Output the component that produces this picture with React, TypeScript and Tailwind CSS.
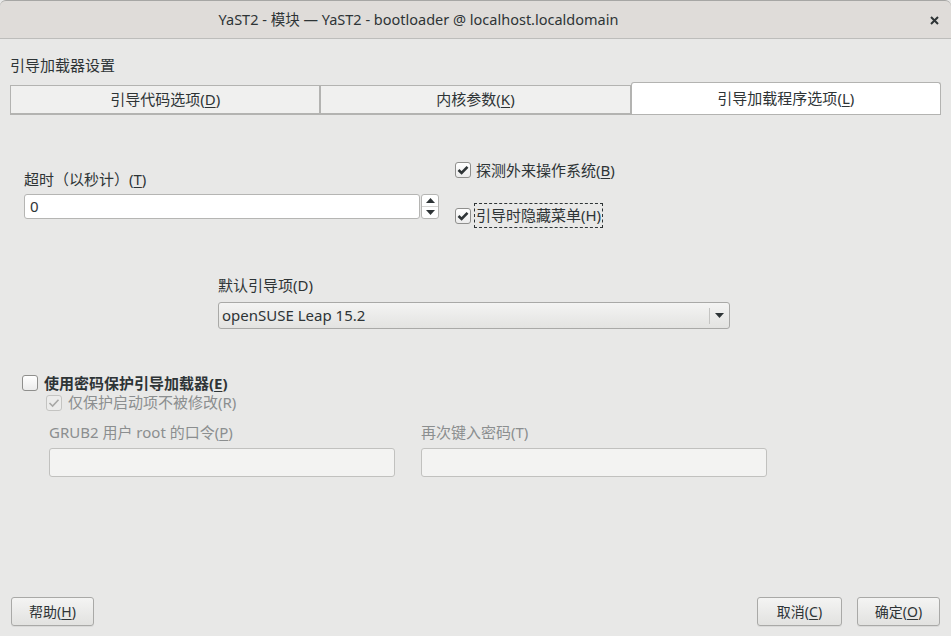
import React from 'react';

const font = { fontFamily: '"Noto Sans", "Noto Sans CJK SC", sans-serif' };

const Check = ({ checked, disabled }: { checked: boolean; disabled?: boolean }) => (
  <span
    className={`flex h-[16px] w-[16px] shrink-0 items-center justify-center rounded-[3px] border ${
      disabled ? 'border-[#c4c4c2] bg-[#ececeb]' : 'border-[#8f8f8d] bg-gradient-to-b from-white to-[#ececec]'
    }`}
  >
    {checked && (
      <svg width="12" height="10" viewBox="0 0 12 10">
        <path
          d="M1.5 5 L4.6 8 L10.5 1.8"
          fill="none"
          stroke={disabled ? '#a8a8a6' : '#2e3436'}
          strokeWidth={disabled ? 1.6 : 2.6}
        />
      </svg>
    )}
  </span>
);

const Tab = ({ label, hot, active }: { label: string; hot: string; active?: boolean }) => (
  <div
    className={`flex flex-1 items-center justify-center border border-[#b3b3b1] text-[15px] text-[#2e3436] ${
      active ? 'h-[32px] rounded-t-[3px] border-b-0 bg-white' : 'h-[29px] bg-[#f0f0ef]'
    }`}
  >
    {label}(<span className="underline underline-offset-2">{hot}</span>)
  </div>
);

const Button = ({ label, hot, w }: { label: string; hot: string; w: string }) => (
  <button
    className={`${w} flex h-[29px] items-center justify-center rounded-[3px] border border-[#a9a9a7] bg-gradient-to-b from-[#f4f4f3] to-[#e2e2e0] text-[14px] text-[#2e3436] shadow-[0_1px_0_rgba(0,0,0,0.06)]`}
  >
    {label}(<span className="underline underline-offset-2">{hot}</span>)
  </button>
);

export default function App() {
  return (
    <div className="flex h-[636px] w-[951px] flex-col overflow-hidden bg-[#e8e8e7]" style={font}>
      {/* title bar */}
      <div className="relative flex h-[39px] shrink-0 items-center justify-center rounded-t-[6px] border-t border-[#a6a6a4] border-b border-b-[#bdbdbb] bg-[#dfdcd9] pr-[114px]">
        <span className="text-[14.5px] text-[#2e3436]">
          YaST2 - 模块 — YaST2 - bootloader @ localhost.localdomain
        </span>
        <svg className="absolute right-[12px] top-[15px]" width="9" height="9" viewBox="0 0 9 9">
          <path d="M1 1 L8 8 M8 1 L1 8" stroke="#2e3436" strokeWidth="2" />
        </svg>
      </div>

      <div className="flex flex-1 flex-col px-[10px] pt-[16px]">
        <div className="text-[15px] leading-[20px] text-[#2e3436]">引导加载器设置</div>

        {/* tabs */}
        <div className="mt-[7px] flex items-end border-b border-[#b3b3b1]">
          <Tab label="引导代码选项" hot="D" />
          <Tab label="内核参数" hot="K" />
          <Tab label="引导加载程序选项" hot="L" active />
        </div>

        {/* panel */}
        <div className="flex flex-1 flex-col">
          <div className="mt-[45px] flex">
            <div className="ml-[14px] flex w-[415px] flex-col pt-[9px]">
              <div className="text-[15px] leading-[20px] text-[#2e3436]">
                超时（以秒计）(<span className="underline underline-offset-2">T</span>)
              </div>
              <div className="mt-[5px] flex h-[25px]">
                <div className="flex w-[396px] items-center rounded-[3px] border border-[#b5b5b3] bg-white px-[5px] text-[15px] text-[#2e3436]">
                  0
                </div>
                <div className="ml-[1px] flex w-[18px] flex-col rounded-[3px] border border-[#b5b5b3] bg-white">
                  <div className="flex flex-1 items-center justify-center border-b border-[#d5d5d3]">
                    <svg width="9" height="5" viewBox="0 0 9 5"><path d="M0 5 L4.5 0 L9 5 Z" fill="#2e3436" /></svg>
                  </div>
                  <div className="flex flex-1 items-center justify-center">
                    <svg width="9" height="5" viewBox="0 0 9 5"><path d="M0 0 L4.5 5 L9 0 Z" fill="#2e3436" /></svg>
                  </div>
                </div>
              </div>
            </div>
            <div className="ml-[16px] flex flex-col">
              <div className="flex h-[20px] items-center gap-[5px] text-[15px] text-[#2e3436]">
                <Check checked />
                <span>
                  探测外来操作系统(<span className="underline underline-offset-2">B</span>)
                </span>
              </div>
              <div className="mt-[23px] flex items-center gap-[3px] text-[15px] text-[#2e3436]">
                <Check checked />
                <span className="border border-dashed border-[#2e3436] px-[1px] leading-[23px]">引导时隐藏菜单(H)</span>
              </div>
            </div>
          </div>

          <div className="ml-[208px] mt-[47px] flex w-[512px] flex-col">
            <div className="text-[15px] leading-[20px] text-[#2e3436]">默认引导项(D)</div>
            <div className="mt-[7px] flex h-[27px] items-center rounded-[3px] border border-[#a9a9a7] bg-gradient-to-b from-[#f4f4f3] to-[#e3e3e1] text-[15px] text-[#2e3436]">
              <span className="flex-1 px-[3px]">openSUSE Leap 15.2</span>
              <span className="h-[16px] border-l border-[#c4c4c2]" />
              <span className="flex w-[19px] justify-center">
                <svg width="9" height="5" viewBox="0 0 9 5"><path d="M0 0 L4.5 5 L9 0 Z" fill="#2e3436" /></svg>
              </span>
            </div>
          </div>

          <div className="ml-[12px] mt-[44px] flex flex-col">
            <div className="flex h-[20px] items-center gap-[6px] text-[15px] font-bold text-[#2e3436]">
              <Check checked={false} />
              <span>
                使用密码保护引导加载器(<span className="underline underline-offset-2">E</span>)
              </span>
            </div>
            <div className="ml-[24px] flex h-[19px] items-center gap-[6px] text-[15px] text-[#8b8e8f]">
              <Check checked disabled />
              <span>仅保护启动项不被修改(R)</span>
            </div>
            <div className="ml-[27px] mt-[10px] flex gap-[26px] text-[15px] text-[#8b8e8f]">
              <div className="flex w-[346px] flex-col">
                <div className="leading-[20px]">
                  GRUB2 用户 root 的口令(<span className="underline underline-offset-2">P</span>)
                </div>
                <div className="mt-[6px] h-[29px] rounded-[3px] border border-[#c1c1bf] bg-[#f3f3f2]" />
              </div>
              <div className="flex w-[346px] flex-col">
                <div className="leading-[20px]">再次键入密码(T)</div>
                <div className="mt-[6px] h-[29px] rounded-[3px] border border-[#c1c1bf] bg-[#f3f3f2]" />
              </div>
            </div>
          </div>

          <div className="mt-auto mb-[10px] flex items-center">
            <Button label="帮助" hot="H" w="w-[83px] ml-[1px]" />
            <div className="flex-1" />
            <Button label="取消" hot="C" w="w-[85px]" />
            <Button label="确定" hot="O" w="w-[83px] ml-[15px] mr-[1px]" />
          </div>
        </div>
      </div>
    </div>
  );
}
